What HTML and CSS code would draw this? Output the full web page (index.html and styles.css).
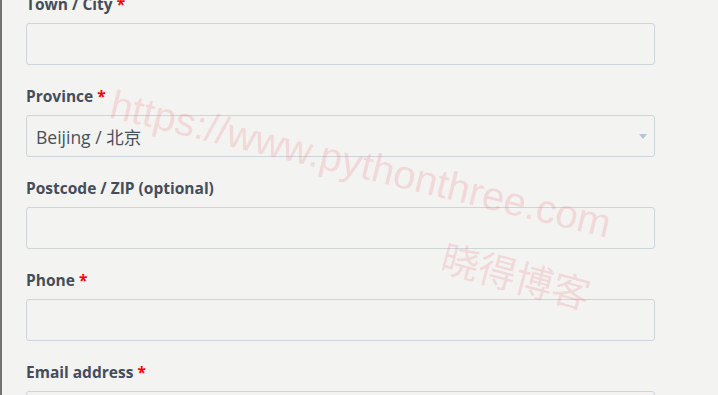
FILE: index.html
```html
<!DOCTYPE html>
<html lang="en">
<head>
<meta charset="utf-8">
<title>Checkout fields</title>
<link rel="stylesheet" href="styles.css">
</head>
<body>
<div class="page">
  <form class="form">
    <div class="field">
      <label class="label">Town / City <abbr class="req">*</abbr></label>
      <input class="input" type="text">
    </div>
    <div class="field">
      <label class="label">Province <abbr class="req">*</abbr></label>
      <div class="select">
        <span class="select-text">Beijing / 北京</span>
        <svg class="select-arrow" width="8" height="5" viewBox="0 0 8 5"><path d="M0 0H8L4 5Z" fill="#b7c2d2"/></svg>
      </div>
    </div>
    <div class="field">
      <label class="label">Postcode / ZIP (optional)</label>
      <input class="input" type="text">
    </div>
    <div class="field">
      <label class="label">Phone <abbr class="req">*</abbr></label>
      <input class="input" type="text">
    </div>
    <div class="field">
      <label class="label">Email address <abbr class="req">*</abbr></label>
      <input class="input" type="text">
    </div>
  </form>
  <div class="wm wm-url">https://www.pythonthree.com</div>
  <div class="wm wm-cn">晓得博客</div>
</div>
</body>
</html>
```
FILE: styles.css
```css
html, body {
  margin: 0;
  padding: 0;
  background: #f3f3f1;
  overflow: hidden;
}
.page {
  position: relative;
  height: 395px;
  border-left: 2px solid #737373;
  padding-left: 24px;
  overflow: hidden;
}
.form {
  width: 629px;
  margin-top: -7px;
}
.field {
  margin-bottom: 20px;
}
.label {
  display: block;
  font-family: "Open Sans", "Liberation Sans", sans-serif;
  font-weight: 700;
  font-size: 15.5px;
  line-height: 22px;
  color: #454d5c;
  margin-bottom: 8px;
}
.req {
  color: #ff0000;
  text-decoration: none;
  border: 0;
}
.input,
.select {
  display: block;
  box-sizing: border-box;
  width: 100%;
  height: 42px;
  border: 1px solid #cdd4dc;
  border-radius: 3px;
  background: transparent;
  margin: 0;
}
.select {
  display: flex;
  align-items: center;
  justify-content: space-between;
  padding: 0 7px 0 9px;
}
.select-text {
  font-family: "Open Sans", "Noto Sans CJK SC", sans-serif;
  font-size: 17.5px;
  color: #4a505c;
}
.select-arrow {
  display: block;
}
.wm {
  position: absolute;
  white-space: nowrap;
  color: rgba(235, 100, 115, 0.2);
  pointer-events: none;
}
.wm-url {
  left: 106px;
  top: 83px;
  font-family: "Liberation Sans", Arial, sans-serif;
  font-size: 40px;
  line-height: 40px;
  transform-origin: 0 34px;
  transform: rotate(13.6deg);
}
.wm-cn {
  left: 441px;
  top: 236px;
  font-family: "Noto Sans CJK SC", sans-serif;
  font-size: 38px;
  line-height: 38px;
  transform-origin: 0 50%;
  transform: rotate(15deg);
}
```
